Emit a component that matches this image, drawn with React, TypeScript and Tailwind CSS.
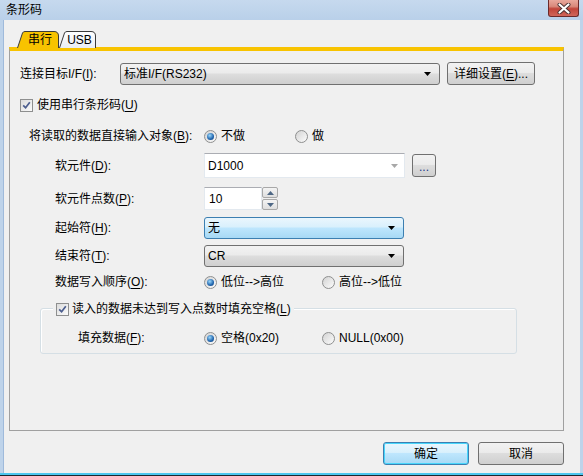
import React from "react";

const FONT = "font-['Liberation_Sans','Noto_Sans_CJK_SC',sans-serif]";

function U({ c }: { c: string }) {
  return <span className="underline underline-offset-[2px] decoration-[1px]">{c}</span>;
}

function Check() {
  return (
    <span className="w-[13px] h-[13px] border border-[#8e8f8f] bg-[linear-gradient(135deg,#dcdcdc,#fbfbfb)] flex items-center justify-center shrink-0">
      <svg width="9" height="9" viewBox="0 0 9 9">
        <path d="M1.2 4.3 L3.6 6.8 L7.8 1.2" stroke="#4b5d8e" strokeWidth="1.7" fill="none" />
      </svg>
    </span>
  );
}

function Radio({ on }: { on?: boolean }) {
  return (
    <span className="w-[13px] h-[13px] rounded-full border border-[#8e8f8f] bg-[linear-gradient(135deg,#d3d3d3,#fcfcfc)] flex items-center justify-center shrink-0">
      {on && (
        <span className="w-[7px] h-[7px] rounded-full bg-[radial-gradient(circle_at_40%_35%,#9bd8fb,#1f64ad_60%,#0d3b73)]" />
      )}
    </span>
  );
}

function Option({ on, children, w }: { on?: boolean; children: React.ReactNode; w?: string }) {
  return (
    <span className={`flex items-center gap-[4px] ${w ?? ""}`}>
      <Radio on={on} />
      <span>{children}</span>
    </span>
  );
}

function Arrow({ color = "#000" }: { color?: string }) {
  return (
    <svg width="7" height="4" viewBox="0 0 7 4">
      <path d="M0 0 H7 L3.5 4 Z" fill={color} />
    </svg>
  );
}

function Combo({ text, w, active }: { text: string; w: string; active?: boolean }) {
  return (
    <div
      className={`${w} h-[22px] rounded-[3px] border flex items-center justify-between pl-[3px] pr-[8px] ${
        active
          ? "border-[#3c7fb1] bg-[linear-gradient(#eaf6fd_0%,#d9f0fc_45%,#bee6fd_50%,#a7d9f5_100%)]"
          : "border-[#707070] bg-[linear-gradient(#f2f2f2_0%,#ebebeb_45%,#dddddd_50%,#cfcfcf_100%)]"
      }`}
    >
      <span>{text}</span>
      <Arrow />
    </div>
  );
}

function Btn({ children, w, h = "h-[23px]", def }: { children: React.ReactNode; w: string; h?: string; def?: boolean }) {
  return (
    <div
      className={`${w} ${h} rounded-[3px] border flex items-center justify-center ${
        def
          ? "border-[#3c7fb1] bg-[linear-gradient(#eaf6fd_0%,#d9f0fc_45%,#bee6fd_50%,#a7d9f5_100%)] shadow-[inset_0_0_0_1px_#48d6fb]"
          : "border-[#707070] bg-[linear-gradient(#f2f2f2_0%,#ebebeb_45%,#dddddd_50%,#cfcfcf_100%)]"
      }`}
    >
      {children}
    </div>
  );
}

function Tab({ label, active, w }: { label: string; active?: boolean; w: number }) {
  return (
    <div className="relative h-[17px] flex items-center justify-center" style={{ width: w }}>
      <svg className="absolute inset-0" width={w} height="17" viewBox={`0 0 ${w} 17`}>
        <defs>
          <linearGradient id="tabg" x1="0" y1="0" x2="0" y2="1">
            <stop offset="0" stopColor="#ffffff" />
            <stop offset="1" stopColor="#e9eef5" />
          </linearGradient>
        </defs>
        <path
          d={`M0.5 17 L5.5 2 Q6.2 0.5 8 0.5 L${w - 5} 0.5 Q${w - 0.5} 0.5 ${w - 0.5} 5 L${w - 0.5} 17`}
          fill={active ? "#f8c300" : "url(#tabg)"}
          stroke="#3a3a3a"
          strokeWidth="1"
        />
      </svg>
      <span className="relative pl-[4px] leading-[14px]">{label}</span>
    </div>
  );
}

export default function App() {
  return (
    <div className={`${FONT} text-[12px] text-black w-[583px] h-[476px] flex flex-col bg-[#bed3ea] overflow-hidden`}>
      {/* Title bar */}
      <div className="h-[20px] shrink-0 flex items-start justify-between bg-[linear-gradient(#c6d9ee,#b9d0e9)]">
        <span className="pl-[6px] pt-[2px] leading-[16px] text-[12px]">条形码</span>
        <div className="mr-[4px] w-[31px] h-[17px] rounded-b-[3px] border border-t-0 border-[#6b2a2a] bg-[linear-gradient(#e9a89c_0%,#d9897b_40%,#c1453a_55%,#d0665a_100%)] flex items-center justify-center">
          <svg width="14" height="11" viewBox="0 0 14 11">
            <path d="M2.5 1.5 L11.5 9.5 M11.5 1.5 L2.5 9.5" stroke="#4a3030" strokeWidth="4" strokeLinecap="round" />
            <path d="M2.5 1.5 L11.5 9.5 M11.5 1.5 L2.5 9.5" stroke="#ffffff" strokeWidth="2.2" strokeLinecap="round" />
          </svg>
        </div>
      </div>

      {/* Window body */}
      <div className="flex-1 flex flex-col mx-[3px] bg-[#f0f0f0] border-l border-[#9fbadb]">
        {/* Tabs */}
        <div className="flex mt-[11px] ml-[13px] h-[16px] items-start">
          <Tab label="串行" active w={42} />
          <Tab label="USB" w={37} />
        </div>

        {/* Tab panel */}
        <div className="ml-[5px] w-[555px] h-[384px] border border-[#a0a0a0] border-t-[4px] border-t-[#f8c300] flex flex-col leading-[14px]">
          {/* Row 1 */}
          <div className="mt-[11px] h-[23px] flex items-center pl-[10px]">
            <span className="w-[100px]">
              连接目标I/F(<U c="I" />):
            </span>
            <Combo text="标准I/F(RS232)" w="w-[320px]" />
            <div className="ml-[7px]">
              <Btn w="w-[88px]">
                <span>
                  详细设置(<U c="E" />)...
                </span>
              </Btn>
            </div>
          </div>

          {/* Row 2 */}
          <div className="mt-[12px] h-[16px] flex items-center pl-[10px] gap-[4px]">
            <Check />
            <span>
              使用串行条形码(<U c="U" />)
            </span>
          </div>

          {/* Row 3 */}
          <div className="mt-[15px] h-[16px] flex items-center pl-[19px]">
            <span className="w-[175px]">
              将读取的数据直接输入对象(<U c="B" />):
            </span>
            <Option on w="w-[91px]">不做</Option>
            <Option>做</Option>
          </div>

          {/* Row 4 */}
          <div className="mt-[9px] h-[25px] flex items-center pl-[45px]">
            <span className="w-[149px]">
              软元件(<U c="D" />):
            </span>
            <div className="w-[201px] h-[25px] bg-white border border-[#e3e9ef] border-t-[#abadb3] flex items-center justify-between pl-[3px] pr-[6px]">
              <span>D1000</span>
              <Arrow color="#a8a8a8" />
            </div>
            <div className="ml-[7px]">
              <Btn w="w-[24px]">
                <span className="text-[#1a3a8a] leading-[10px] pt-[3px]">...</span>
              </Btn>
            </div>
          </div>

          {/* Row 5 */}
          <div className="mt-[9px] h-[23px] flex items-center pl-[45px]">
            <span className="w-[149px]">
              软元件点数(<U c="P" />):
            </span>
            <div className="w-[58px] h-[23px] bg-white border border-[#e3e9ef] border-t-[#abadb3] flex items-center pl-[4px]">
              10
            </div>
            <div className="w-[16px] h-[23px] flex flex-col gap-[1px]">
              <div className="flex-1 border border-[#a8a8a8] rounded-[2px] bg-[linear-gradient(#f4f4f4,#dedede)] flex items-center justify-center">
                <svg width="7" height="4" viewBox="0 0 7 4">
                  <path d="M0 4 H7 L3.5 0 Z" fill="#4e6785" />
                </svg>
              </div>
              <div className="flex-1 border border-[#a8a8a8] rounded-[2px] bg-[linear-gradient(#f4f4f4,#dedede)] flex items-center justify-center">
                <Arrow color="#4e6785" />
              </div>
            </div>
          </div>

          {/* Row 6 */}
          <div className="mt-[7px] h-[22px] flex items-center pl-[45px]">
            <span className="w-[149px]">
              起始符(<U c="H" />):
            </span>
            <Combo text="无" w="w-[200px]" active />
          </div>

          {/* Row 7 */}
          <div className="mt-[6px] h-[22px] flex items-center pl-[45px]">
            <span className="w-[149px]">
              结束符(<U c="T" />):
            </span>
            <Combo text="CR" w="w-[200px]" />
          </div>

          {/* Row 8 */}
          <div className="mt-[7px] h-[16px] flex items-center pl-[45px]">
            <span className="w-[149px]">
              数据写入顺序(<U c="O" />):
            </span>
            <Option on w="w-[118px]">低位--&gt;高位</Option>
            <Option>高位--&gt;低位</Option>
          </div>

          {/* Group box */}
          <div className="relative mt-[18px] ml-[30px] w-[477px] h-[46px] rounded-[3px] border border-[#d5dfe5] shadow-[inset_1px_1px_0_#ffffff]">
            <div className="absolute left-[12px] top-[-8px] h-[16px] px-[3px] bg-[#f0f0f0] flex items-center gap-[3px]">
              <Check />
              <span>
                读入的数据未达到写入点数时填充空格(<U c="L" />)
              </span>
            </div>
            <div className="mt-[21px] h-[16px] flex items-center pl-[37px]">
              <span className="w-[126px]">
                填充数据(<U c="F" />):
              </span>
              <Option on w="w-[118px]">空格(0x20)</Option>
              <Option>NULL(0x00)</Option>
            </div>
          </div>
        </div>

        {/* Dialog buttons */}
        <div className="mt-[11px] flex justify-end gap-[9px] pr-[16px]">
          <Btn w="w-[86px]" def>
            确定
          </Btn>
          <Btn w="w-[86px]">取消</Btn>
        </div>
      </div>

      {/* Bottom edge */}
      <div className="h-[2px] shrink-0 bg-[#4cc6ee]" />
      <div className="h-[1px] shrink-0 bg-[#1c2630]" />
    </div>
  );
}
